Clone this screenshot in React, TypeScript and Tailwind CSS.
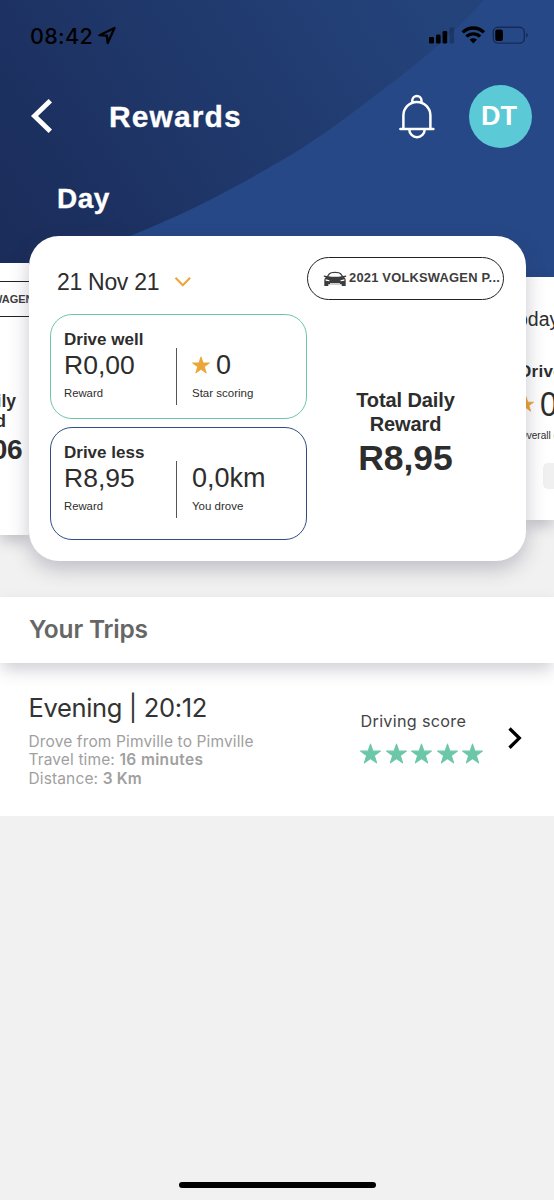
import React from "react";

const STAR = "M12 1.2l2.75 8.1h8.55l-6.9 5.1 2.6 8.3L12 17.7l-7 5 2.6-8.3L.7 9.3h8.55z";

function Star({ className }: { className: string }) {
  return (
    <svg viewBox="0 0 24 24" className={className}>
      <path d={STAR} fill="currentColor" stroke="currentColor" strokeWidth="1.2" strokeLinejoin="round" />
    </svg>
  );
}

function StatusBar() {
  return (
    <div className="flex h-[70px] items-start pt-[24px] pl-[30px] text-black font-['Inter',sans-serif]">
      <span className="w-[64px] text-[21.500px] leading-[24px] font-medium whitespace-nowrap tracking-[0.35px]">08:42</span>
      <svg className="mt-[2px] ml-[3px] h-[20px] w-[20px]" viewBox="0 0 20 20" fill="none" stroke="currentColor" strokeWidth="2.3" strokeLinejoin="round">
        <path d="M17.500 2 2.500 9.200l7.400.4.8 7.400z" />
      </svg>
      <svg className="mt-[2px] ml-[311px] h-[20px] w-[100px]" viewBox="0 0 100 20">
        <g fill="#000">
          <rect x="1" y="11" width="5" height="6.5" rx="1.3" />
          <rect x="8" y="8.6" width="4.6" height="8.9" rx="1.3" />
          <rect x="14.6" y="5" width="4.6" height="12.5" rx="1.3" />
          <rect x="21.5" y="1.5" width="4.6" height="16" rx="1.3" opacity=".22" />
        </g>
        <g fill="none" stroke="#000" strokeWidth="3.3">
          <path d="M34.7 6.4a15 15 0 0 1 21.2 0" />
          <path d="M38.5 10.7a9.6 9.6 0 0 1 13.600 0" />
        </g>
        <path d="M41.600 13.600q3.700-2.800 7.400 0l-3.700 4z" fill="#000" />
        <rect x="65.3" y="1.300" width="31" height="15.800" rx="4.600" fill="none" stroke="#162a58" strokeWidth="1.400" />
        <rect x="67.300" y="3.400" width="7.600" height="11.600" rx="2" fill="#000" />
        <path d="M98 7q1.800.6 1.800 2.200T98 11.400z" fill="#162a58" />
      </svg>
    </div>
  );
}

function Header() {
  return (
    <header className="flex h-[92px] items-start text-white font-['Liberation_Sans',Arial,sans-serif]">
      <svg className="mt-[28px] ml-[29px] h-[36px] w-[26px]" viewBox="0 0 26 36" fill="none" stroke="currentColor" strokeWidth="4.900">
        <path d="M21.300 2.700 5.500 18l15.800 15.300" />
      </svg>
      <h1 className="mt-[29px] ml-[54px] w-[289px] text-[30px] leading-[36px] font-bold tracking-[1.1px] [-webkit-text-stroke:0.3px_white]">Rewards</h1>
      <svg className="mt-[23px] -ml-px h-[46px] w-[38px]" viewBox="0 0 38 46" fill="none" stroke="currentColor" strokeWidth="2.500">
        <path d="M6.400 36V22.500a13.500 13.500 0 0 1 27 0V36M15.300 9.500V7.600a4.600 4.600 0 0 1 9.200 0v1.900M12.300 36.500a7.700 7.700 0 0 0 15.400 0" />
        <path d="M3.400 36h33" strokeLinecap="round" />
      </svg>
      <div className="mt-[15px] ml-[34px] flex h-[63px] w-[63px] items-center justify-center rounded-full bg-[#5bc9d6] pr-[3px] pb-px text-[27px] leading-[30px] font-bold">DT</div>
    </header>
  );
}

function Reward({ title, amount, border, right, caption }: { title: string; amount: string; border: string; right: React.ReactNode; caption: string }) {
  return (
    <section className={`w-[257px] rounded-[22px] border-[1.500px] pt-[14px] pl-[13px] ${border}`}>
      <h3 className="h-[20px] pt-px text-[17px] leading-[20px] font-bold">{title}</h3>
      <div className="flex items-start">
        <div className="w-[112px] pt-[2px]">
          <div className="text-[26.500px] leading-[28px]">{amount}</div>
          <div className="mt-[7px] text-[11.300px] leading-[14px]">Reward</div>
        </div>
        <div className="-mt-px h-[57px] w-px bg-[#555]" />
        <div className="pt-[2px] pl-[15px]">
          <div className="flex h-[28px] items-center text-[27px] leading-[28px]">{right}</div>
          <div className="mt-[7px] text-[11.500px] leading-[14px]">{caption}</div>
        </div>
      </div>
    </section>
  );
}

function Car() {
  return (
    <svg className="mt-[2px] h-[16px] w-[24px] shrink-0" viewBox="0 0 24 16">
      <path fill="#3c3c3c" d="M.8 4.600l3.200.3Q6 1.600 8 1.200q4-.7 8 0 2 .4 4 3.700l3.200-.3v1.200l-2 .5q1.500 1.200 1.500 3V15h-4v-1.800H5.300V15h-4V9.300q0-1.800 1.500-3l-2-.5z" />
      <path fill="#fff" d="M5.300 5.300Q7 2.500 8.300 2.200q3.700-.6 7.400 0 1.300.3 3 3.100-6.700 1.100-13.400 0zM2.600 8.300l4 .9-.4 1.100-3.600-.6zM21.400 8.300l-4 .9.4 1.100 3.600-.6zM7 12h10v.7H7z" />
    </svg>
  );
}

function PreviousCard() {
  return (
    <div className="mt-[27px] h-[272px] w-[29px] shrink-0 overflow-hidden bg-white shadow-[0_6px_14px_rgba(50,50,80,0.25)]">
      <div className="mt-[18px] flex h-[36px] items-center border-y-[1.500px] border-[#222]">
        <span className="-ml-[8px] text-[11px] font-bold whitespace-nowrap text-[#3d3d3d]">WAGEN</span>
      </div>
      <div className="mt-[73px] flex w-[16px] justify-end text-[17.500px] leading-[22px] font-bold">Daily</div>
      <div className="mt-[-2px] flex w-[6px] justify-end text-[17.500px] leading-[22px] font-bold">Reward</div>
      <div className="mt-px flex w-[22px] justify-end text-[28px] leading-[34px] font-bold tracking-[-0.500px]">R8,06</div>
    </div>
  );
}

function NextCard() {
  return (
    <div className="mt-[41px] h-[243px] w-[28px] shrink-0 overflow-hidden bg-white shadow-[0_6px_14px_rgba(50,50,80,0.25)]">
      <div className="mt-[31px] -ml-[9px] text-[19.500px] leading-[22px] whitespace-nowrap">oday</div>
      <div className="mt-[33px] -ml-[7px] text-[17px] leading-[18px] font-bold tracking-[0.3px] whitespace-nowrap">Drive</div>
      <div className="mt-[8px] -ml-[8px] flex h-[30px] w-[50px] items-center">
        <Star className="-mt-px h-[16px] w-[16px] shrink-0 text-[#eaa636]" />
        <span className="ml-[5px] inline-block scale-x-[0.9] text-[35px] leading-[30px]">0</span>
      </div>
      <div className="mt-[11px] -ml-[7px] text-[10px] leading-[12px] whitespace-nowrap">Overall driving</div>
      <div className="mt-[21px] ml-[17px] h-[26px] w-[40px] rounded-[5px] bg-[#f0f0f0]" />
    </div>
  );
}

function DayCard() {
  return (
    <article className="relative h-[325px] w-[497px] shrink-0 rounded-[30px] bg-white shadow-[0_8px_20px_rgba(50,50,80,0.27)]">
      <div className="flex h-[78px] items-start pl-[28px]">
        <div className="mt-[32px] w-[117px] text-[23px] leading-[28px] tracking-[-0.300px] whitespace-nowrap">21 Nov 21</div>
        <svg className="mt-[40px] h-[12px] w-[18px]" viewBox="0 0 18 12" fill="none" stroke="#eda73b" strokeWidth="2.200">
          <path d="m1.500 1.800 7.300 7.400 7.300-7.400" />
        </svg>
        <div className="mt-[21px] ml-[115px] flex h-[43px] w-[197px] items-center rounded-[22px] border-[1.500px] border-[#222] pb-[2px] pl-[15px]">
          <Car />
          <span className="ml-[2px] text-[12.900px] leading-[16px] font-bold tracking-[0.220px] whitespace-nowrap text-[#3d3d3d]">2021 VOLKSWAGEN P...</span>
        </div>
      </div>
      <div className="flex pl-[21px]">
        <div className="grid grid-rows-[105px_113px] gap-[8px]">
          <Reward title="Drive well" amount="R0,00" caption="Star scoring" border="border-[#70c4a8]" right={<><Star className="mr-[6px] h-[18px] w-[18px] text-[#eaa636]" />0</>} />
          <Reward title="Drive less" amount="R8,95" caption="You drove" border="border-[#354c83]" right={<>0,0km</>} />
        </div>
        <div className="ml-[35px] w-[127px] pt-[74px] text-center font-bold">
          <div className="text-[20px] leading-[24px] tracking-[-0.1px]">Total Daily<br />Reward</div>
          <div className="text-[35.500px] leading-[44px]">R8,95</div>
        </div>
      </div>
    </article>
  );
}

export default function App() {
  return (
    <main className="relative flex h-[1200px] w-[554px] flex-col overflow-hidden bg-[#f1f1f1] text-[#2d2d2d]">
      <svg className="absolute top-0 left-0 h-[300px] w-[554px]" viewBox="0 0 554 300">
        <defs>
          <linearGradient id="navy" x1="0" y1="0.7" x2="1" y2="0.3">
            <stop offset="0" stopColor="#1b2d5b" />
            <stop offset="1" stopColor="#24437b" />
          </linearGradient>
        </defs>
        <path d="M0 0h554v300H0z" fill="#264886" />
        <path d="M0 0H484C450 38 415 66 377 94 345 119 310 145 277 163 230 191 180 216 130 236 90 252 40 270 0 300Z" fill="url(#navy)" />
      </svg>
      <div className="relative flex flex-1 flex-col">
        <StatusBar />
        <Header />
        <h2 className="h-[74px] pt-[20px] pl-[57px] text-[28px] leading-[34px] font-bold tracking-[0.500px] text-white font-['Liberation_Sans',Arial,sans-serif] [-webkit-text-stroke:0.3px_white]">Day</h2>
        <div className="flex h-[361px] items-start font-['Liberation_Sans',Arial,sans-serif]">
          <PreviousCard />
          <DayCard />
          <NextCard />
        </div>
        <div className="relative z-10 h-[66px] bg-white pl-[29px] font-['Inter',sans-serif] shadow-[0_8px_16px_-2px_rgba(50,50,80,0.25)]">
          <h2 className="pt-[17px] text-[24.500px] leading-[30px] font-semibold tracking-[-0.200px] text-[#666]">Your Trips</h2>
        </div>
        <section className="flex h-[153px] items-start bg-white pl-[28.500px] font-['Inter',sans-serif]">
          <div className="w-[332px] pt-[29px]">
            <h3 className="text-[25.500px] leading-[32px] font-normal whitespace-nowrap tracking-[-0.350px] text-[#333]">Evening | 20:12</h3>
            <div className="mt-[8.500px] text-[15.500px] leading-[18.500px] tracking-[0.130px] whitespace-nowrap text-[#a0a0a0]">
              <p>Drove from Pimville to Pimville</p>
              <p>Travel time: <b className="font-semibold tracking-[0.350px]">16 minutes</b></p>
              <p>Distance: <b className="font-semibold">3 Km</b></p>
            </div>
          </div>
          <div className="w-[146px] pt-[48px]">
            <div className="text-[16.200px] leading-[20px] tracking-[0.300px] text-[#444]">Driving score</div>
            <div className="mt-[12px] -ml-[0.500px] flex gap-[4.600px] text-[#6bc7a7]">
              {[0, 1, 2, 3, 4].map((i) => <Star key={i} className="h-[21px] w-[21px]" />)}
            </div>
          </div>
          <svg className="mt-[63px] h-[24px] w-[18px]" viewBox="0 0 18 24" fill="none" stroke="#000" strokeWidth="3.300">
            <path d="m2.500 2.500 9.800 9.600-9.800 9.600" />
          </svg>
        </section>
        <div className="mt-auto mb-[12px] ml-[179px] h-[6px] w-[197px] rounded-full bg-black" />
      </div>
    </main>
  );
}
